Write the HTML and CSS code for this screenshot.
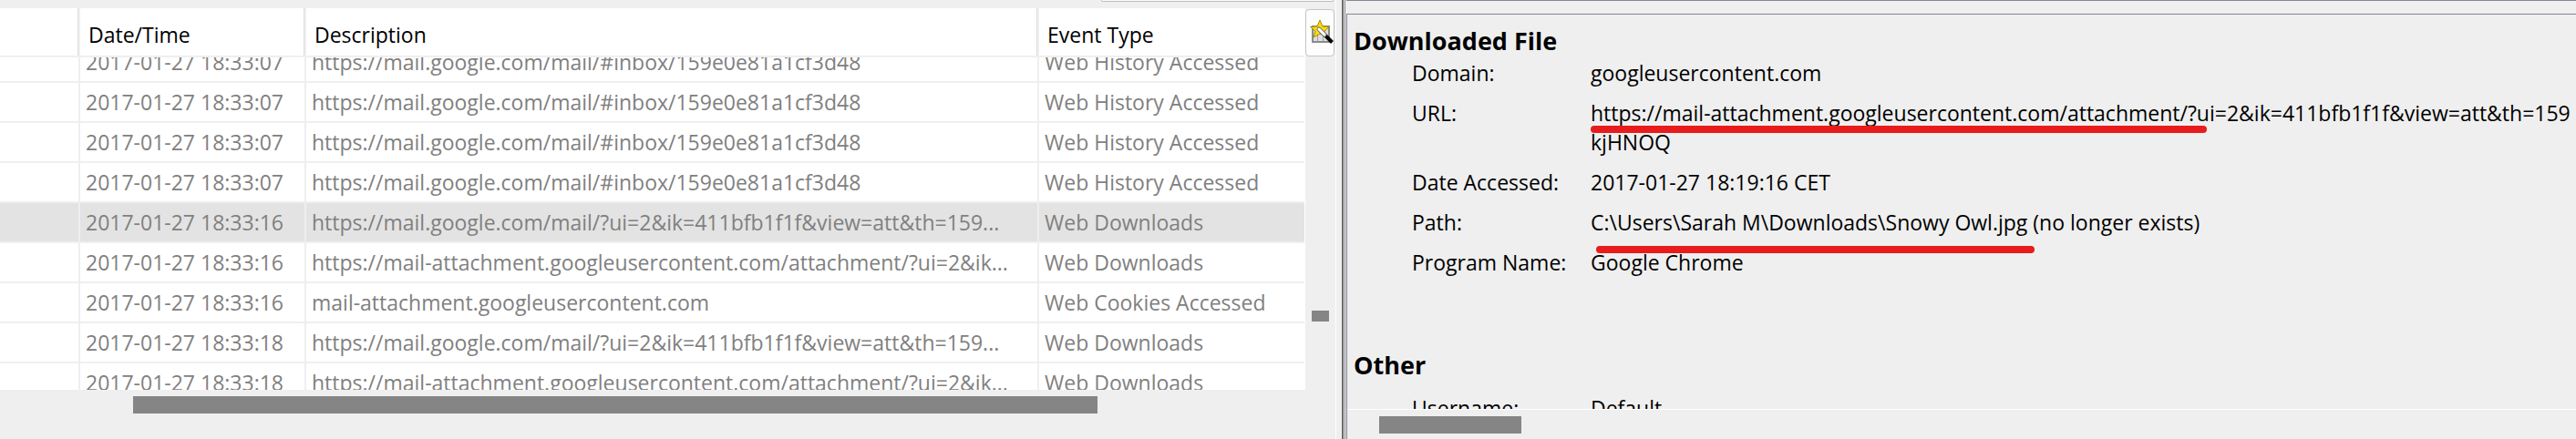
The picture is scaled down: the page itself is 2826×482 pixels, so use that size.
FILE: index.html
```html
<!DOCTYPE html>
<html lang="en">
<head>
<meta charset="utf-8">
<title>Timeline artifacts</title>
<link rel="stylesheet" href="styles.css">
</head>
<body>
<main class="split">
  <section class="results">
    <div class="toolbar"><span class="toolbar-edge"></span></div>
    <div class="results-body">
      <table class="events">
        <thead>
          <tr><th></th><th>Date/Time</th><th>Description</th><th>Event Type</th></tr>
        </thead>
        <tbody>
          <tr><td></td><td>2017-01-27 18:33:07</td><td>https://mail.google.com/mail/#inbox/159e0e81a1cf3d48</td><td>Web History Accessed</td></tr>
          <tr><td></td><td>2017-01-27 18:33:07</td><td>https://mail.google.com/mail/#inbox/159e0e81a1cf3d48</td><td>Web History Accessed</td></tr>
          <tr><td></td><td>2017-01-27 18:33:07</td><td>https://mail.google.com/mail/#inbox/159e0e81a1cf3d48</td><td>Web History Accessed</td></tr>
          <tr><td></td><td>2017-01-27 18:33:07</td><td>https://mail.google.com/mail/#inbox/159e0e81a1cf3d48</td><td>Web History Accessed</td></tr>
          <tr class="selected"><td></td><td>2017-01-27 18:33:16</td><td>https://mail.google.com/mail/?ui=2&amp;ik=411bfb1f1f&amp;view=att&amp;th=159...</td><td>Web Downloads</td></tr>
          <tr><td></td><td>2017-01-27 18:33:16</td><td>https://mail-attachment.googleusercontent.com/attachment/?ui=2&amp;ik...</td><td>Web Downloads</td></tr>
          <tr><td></td><td>2017-01-27 18:33:16</td><td>mail-attachment.googleusercontent.com</td><td>Web Cookies Accessed</td></tr>
          <tr><td></td><td>2017-01-27 18:33:18</td><td>https://mail.google.com/mail/?ui=2&amp;ik=411bfb1f1f&amp;view=att&amp;th=159...</td><td>Web Downloads</td></tr>
          <tr><td></td><td>2017-01-27 18:33:18</td><td>https://mail-attachment.googleusercontent.com/attachment/?ui=2&amp;ik...</td><td>Web Downloads</td></tr>
        </tbody>
      </table>
      <div class="side">
        <button class="columns-button" type="button" aria-label="Choose columns">
          <svg width="27" height="30" viewBox="0 0 27 30" aria-hidden="true">
            <rect x="4" y="8" width="18" height="17" fill="#dedede" stroke="#8a8a8a" stroke-width="2"/>
            <path d="M9.500 9V24M15.500 9V24" stroke="#a2a2a2" stroke-width="1"/>
            <path d="M12 1L15 8L22.500 8.500L17 13L18 19L12 16L5 20L7 13L1.500 8.500L9 8Z" fill="#ffdc08" stroke="#a88d00" stroke-width="1"/>
            <path d="M13 13L25.500 25.500" stroke="#000" stroke-width="4"/>
            <path d="M11 11L17 17" stroke="#777" stroke-width="5" stroke-linecap="round"/>
            <path d="M11 11L17 17" stroke="#fff" stroke-width="3" stroke-linecap="round"/>
          </svg>
        </button>
        <div class="v-track"><div class="v-thumb"></div></div>
      </div>
    </div>
    <div class="h-track"><div class="h-thumb"></div></div>
  </section>
  <div class="divider"></div>
  <section class="details">
    <div class="details-frame">
      <div class="details-view">
        <h2>Downloaded File</h2>
        <dl>
          <dt>Domain:</dt><dd>googleusercontent.com</dd>
          <dt>URL:</dt><dd class="marked mark-url">https://mail-attachment.googleusercontent.com/attachment/?ui=2&amp;ik=411bfb1f1f&amp;view=att&amp;th=159<br>kjHNOQ</dd>
          <dt>Date Accessed:</dt><dd>2017-01-27 18:19:16 CET</dd>
          <dt>Path:</dt><dd class="marked mark-path">C:\Users\Sarah M\Downloads\Snowy Owl.jpg (no longer exists)</dd>
          <dt>Program Name:</dt><dd>Google Chrome</dd>
        </dl>
        <h2 class="other">Other</h2>
        <dl class="other-list">
          <dt>Username:</dt><dd>Default</dd>
        </dl>
      </div>
      <div class="d-track"><div class="d-thumb"></div></div>
    </div>
  </section>
</main>
</body>
</html>
```
FILE: styles.css
```css
* { box-sizing: border-box; }

body {
  margin: 0;
  height: 100vh;
  overflow: hidden;
  background: #efefef;
  color: #000;
  font: 23px/32px "Open Sans", "Noto Sans", sans-serif;
}

.split {
  display: grid;
  grid-template-columns: minmax(0, 1472fr) 2px minmax(0, 1352fr);
  height: 100%;
}

.results {
  display: flex;
  flex-direction: column;
  min-height: 0;
  margin-right: 6px;
  border-right: 1px solid #fff;
}

.toolbar {
  display: flex;
  justify-content: flex-end;
  height: 9px;
  padding-right: 2px;
}

.toolbar-edge {
  width: 255px;
  height: 2px;
  border: 1px solid #bcbcbc;
  border-top: 0;
  border-radius: 0 0 4px 4px;
  background: #fdfdfd;
}

.results-body {
  display: flex;
  flex: 1;
  min-height: 0;
}

.events {
  display: flex;
  flex-direction: column;
  flex: 1;
  min-width: 0;
  border-right: 1px solid #fff;
}

.events thead { display: block; }

.events tbody {
  display: block;
  flex: 1;
  min-height: 0;
  overflow: hidden;
}

.events tr {
  display: grid;
  grid-template-columns: 86px 246px minmax(0, 1fr) 291px;
  column-gap: 2px;
  border-bottom: 2px solid #efefef;
  background: #efefef;
}

.events th,
.events td {
  overflow: hidden;
  padding: 5px 6px;
  background: #fff;
  white-space: nowrap;
  text-align: left;
  font-weight: 400;
}

.events td { height: 42px; color: #808080; }

.events th {
  height: 52px;
  padding: 13px 9px 7px;
  border-right: 1px solid #dedede;
}

.events th:last-child { border-right: 0; }

/* The list is scrolled part of the way into its first row. */
.events tbody tr:first-child { margin-top: -16px; }

.events .selected td { background: #e3e3e3; }

.side {
  display: flex;
  flex-direction: column;
  width: 33px;
}

.columns-button {
  display: flex;
  justify-content: flex-end;
  width: 32px;
  height: 52px;
  margin-top: 1px;
  padding: 10px 0 0;
  border: 1px solid #c4c4c4;
  border-radius: 4px;
  background: #fdfdfd;
}

.columns-button svg { flex: none; }

.v-track { flex: 1; padding: 279px 7px 0; }
.v-thumb { height: 12px; background: #858585; }

.h-track {
  height: 54px;
  padding: 7px 261px 0 146px;
}

.h-thumb { height: 19px; background: #858585; }

.divider { background: #6c6c6c; }

.details {
  min-width: 0;
  min-height: 0;
  margin-left: 1px;
  padding-left: 1px;
  border-left: 1px solid #868892;
  background: linear-gradient(#868892, #868892) 1px 0 / 100% 1px no-repeat;
  padding-top: 15px;
}

.details-frame {
  display: flex;
  flex-direction: column;
  height: 100%;
  border: solid #868892;
  border-width: 1px 0 0 1px;
}

.details-view {
  flex: 1;
  min-height: 0;
  overflow: hidden;
  padding: 10px 0 0 7px;
  border-bottom: 1px solid #fff;
  white-space: nowrap;
}

h2 {
  margin: 0;
  font-size: 27px;
  line-height: 38px;
}

dl {
  display: grid;
  grid-template-columns: 196px minmax(0, 1fr);
  row-gap: 12px;
  margin: 0 0 0 64px;
}

dd { margin: 0; }

.other { margin-top: 78px; }
.other-list { margin-top: 12px; }

.marked { position: relative; }

.marked::after {
  content: "";
  position: absolute;
  height: 8px;
  border-radius: 4px;
  background: #e81c1c;
}

.mark-url::after { top: 30px; left: 0; width: 676px; }
.mark-path::after { top: 42px; left: 6px; width: 481px; }

.d-track { height: 32px; padding: 7px 0 0 35px; }
.d-thumb { width: 156px; height: 19px; background: #858585; }
```
